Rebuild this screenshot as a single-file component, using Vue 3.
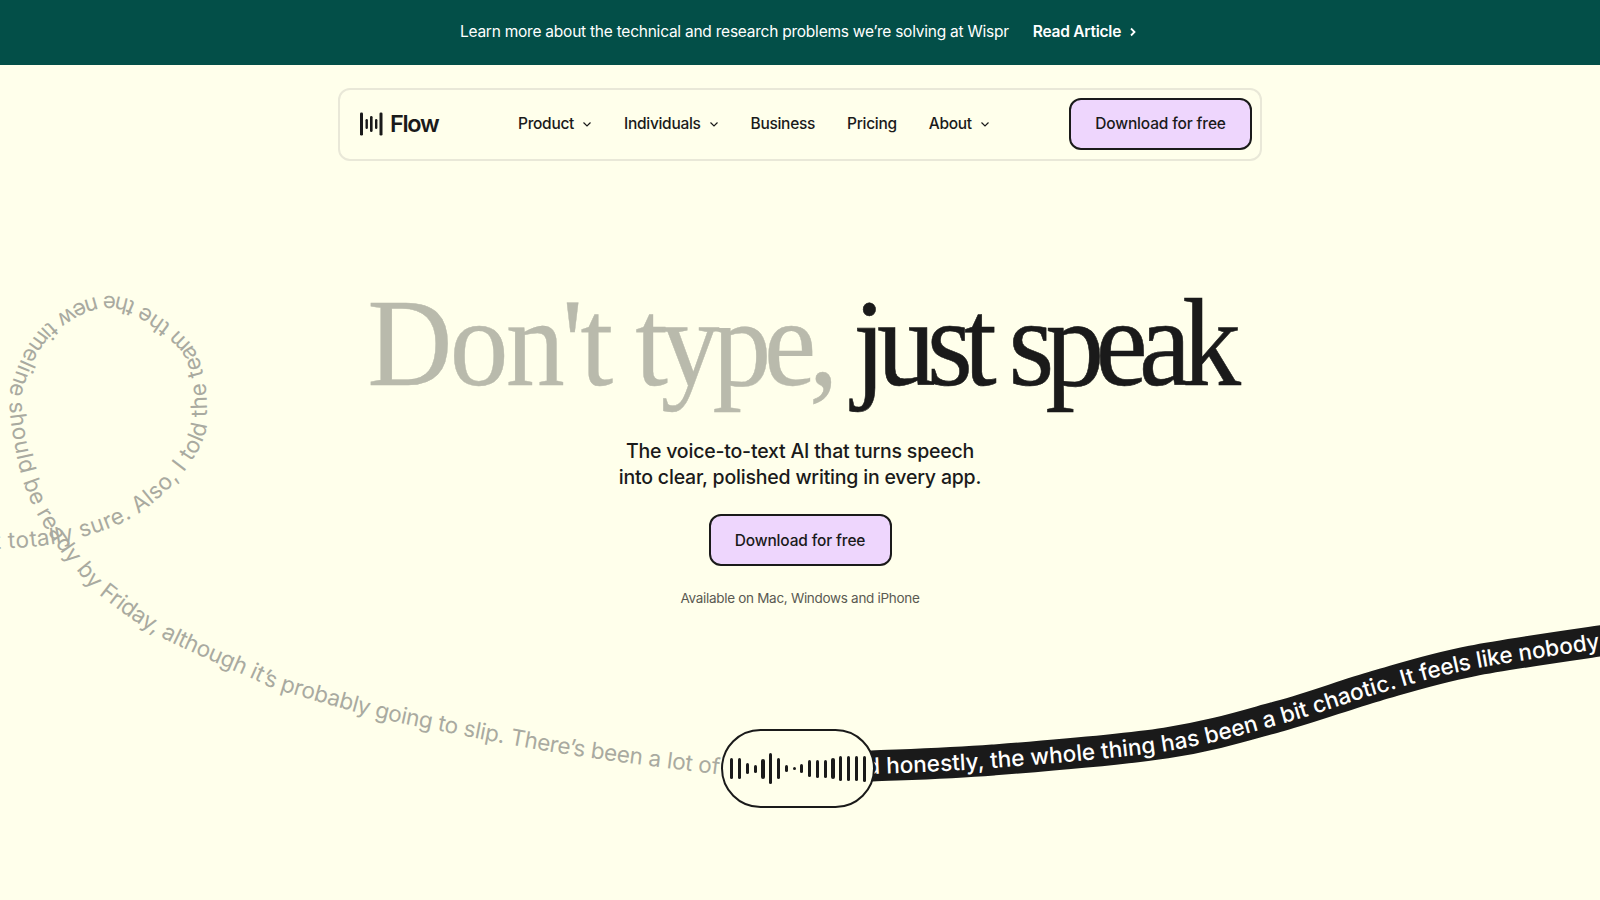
<template>
  <div class="page">
    <div class="banner">
      <span class="banner-text">Learn more about the technical and research problems we’re solving at Wispr</span>
      <a class="banner-link">Read Article
        <svg width="8" height="10" viewBox="0 0 8 10"><path d="M2 1.5 5.5 5 2 8.5" fill="none" stroke="#fff" stroke-width="1.8"/></svg>
      </a>
    </div>

    <nav class="nav">
      <div class="logo">
        <svg width="24" height="24" viewBox="0 0 24 24">
          <rect v-for="b in logoBars" :key="b.x" :x="b.x" :y="12 - b.h / 2" :width="b.w" :height="b.h" rx="1.3" fill="#1a1a1a" />
        </svg>
        <span class="logo-text">Flow</span>
      </div>
      <div class="links">
        <a v-for="l in links" :key="l.name" class="link">
          {{ l.name }}
          <svg v-if="l.menu" width="10" height="10" viewBox="0 0 10 10"><path d="M1.5 3.5 5 7l3.5-3.5" fill="none" stroke="#1a1a1a" stroke-width="1.2"/></svg>
        </a>
      </div>
      <button class="cta">Download for free</button>
    </nav>

    <main class="hero">
      <h1 class="title"><span class="muted"><span class="dont">Don't</span> <span class="type">type,</span></span> <span class="dark">just speak</span></h1>
      <p class="sub">The voice-to-text AI that turns speech<br>into clear, polished writing in every app.</p>
      <button class="cta">Download for free</button>
      <p class="avail">Available on Mac, Windows and iPhone</p>
    </main>

    <svg class="stream" width="1600" height="900" viewBox="0 0 1600 900">
      <path id="greyPath" :d="greyPath" fill="none" />
      <text class="grey-text"><textPath href="#greyPath"><tspan class="loop">t totally sure. Also, I told the team the the new timeline should be ready by </tspan>Friday, although it’s probably going to slip. There’s been a lot of back and forth</textPath></text>
      <path id="ribbonPath" :d="ribbonPath" fill="none" stroke="#1a1a1a" stroke-width="31" />
      <text class="ribbon-text" dy="8"><textPath href="#ribbonPath" startOffset="-10">and honestly, the whole thing has been a bit chaotic. It feels like nobody knows</textPath></text>
    </svg>

    <div class="pill">
      <i v-for="(h, i) in waveBars" :key="i" class="bar" :style="{ height: h + 'px' }"></i>
    </div>
  </div>
</template>

<script setup>
const links = [
  { name: 'Product', menu: true },
  { name: 'Individuals', menu: true },
  { name: 'Business' },
  { name: 'Pricing' },
  { name: 'About', menu: true }
]

const logoBars = [
  { x: 0, h: 23, w: 3 },
  { x: 5.5, h: 10, w: 2.4 },
  { x: 10, h: 16, w: 2.6 },
  { x: 15, h: 10, w: 2.4 },
  { x: 19.5, h: 23, w: 3 }
]

const waveBars = [21, 21, 11, 8, 20, 31, 21, 7, 3, 9, 17, 18, 18, 21, 25, 25, 25, 26]

// catmull-rom through the points, so the curves can be tuned by moving points
const smooth = (pts) => {
  let d = `M${pts[0][0]} ${pts[0][1]}`
  for (let i = 0; i < pts.length - 1; i++) {
    const p0 = pts[i - 1] || pts[i]
    const p1 = pts[i]
    const p2 = pts[i + 1]
    const p3 = pts[i + 2] || p2
    const c1 = [p1[0] + (p2[0] - p0[0]) / 6, p1[1] + (p2[1] - p0[1]) / 6]
    const c2 = [p2[0] - (p3[0] - p1[0]) / 6, p2[1] - (p3[1] - p1[1]) / 6]
    d += ` C${c1[0]} ${c1[1]} ${c2[0]} ${c2[1]} ${p2[0]} ${p2[1]}`
  }
  return d
}

const greyPath = smooth([
  [-6, 549], [40, 546], [80, 538], [133, 517], [177, 480], [203, 440], [207, 407], [203, 373],
  [190, 343], [157, 315], [120, 297], [80, 302], [37, 333], [13, 380], [10, 413], [20, 470],
  [35, 510], [60, 550], [78, 572], [102, 597], [161, 637], [251, 678], [279, 690], [375, 717],
  [440, 731], [512, 745], [591, 758], [730, 776]
])

const ribbonPath = smooth([
  [850, 767], [872, 766], [993, 760], [1166, 743], [1280, 716], [1376, 686], [1472, 661], [1620, 638]
])
</script>

<style>
html, body {
  margin: 0;
  background: #ffffeb;
}
</style>

<style scoped>
.page {
  position: relative;
  width: 1600px;
  height: 900px;
  overflow: hidden;
  background: #ffffeb;
  color: #1a1a1a;
  font-family: Inter, "Noto Sans", sans-serif;
}
.banner {
  display: flex;
  align-items: center;
  justify-content: center;
  gap: 24px;
  box-sizing: border-box;
  height: 65px;
  padding: 0 3px 2px 0;
  background: #034f48;
  color: #fff;
  font-size: 15.5px;
  letter-spacing: -0.24px;
}
.banner-text {
  font-weight: 400;
}
.banner-link {
  display: flex;
  align-items: center;
  gap: 8px;
  font-weight: 600;
}
.nav {
  display: flex;
  align-items: center;
  box-sizing: border-box;
  width: 924px;
  height: 73px;
  margin: 23px auto 0;
  padding: 0 8px 2px 20px;
  border: 2px solid #e9e8d8;
  border-radius: 12px;
}
.logo {
  display: flex;
  align-items: center;
  gap: 6px;
  width: 158px;
}
.logo-text {
  font-size: 23.5px;
  font-weight: 600;
  letter-spacing: -1.3px;
}
.links {
  display: flex;
  gap: 32px;
  flex: 1;
  font-size: 15.5px;
  font-weight: 500;
  letter-spacing: -0.3px;
}
.link {
  display: flex;
  align-items: center;
  gap: 8px;
}
.cta {
  box-sizing: border-box;
  width: 183px;
  height: 52px;
  border: 2px solid #1a1a1a;
  border-radius: 12px;
  background: #eed6fd;
  color: #1a1a1a;
  font-family: inherit;
  font-size: 15.5px;
  font-weight: 500;
  letter-spacing: -0.15px;
}
.hero {
  position: relative;
  z-index: 1;
  display: flex;
  flex-direction: column;
  align-items: center;
  margin-top: 107px;
}
.title {
  margin: 0;
  font-family: "Liberation Serif", serif;
  font-size: 125px;
  font-weight: 400;
  line-height: 150px;
  word-spacing: -8px;
  white-space: nowrap;
  transform: scaleX(0.94);
}
.muted {
  color: #b9baac;
  word-spacing: -5px;
  -webkit-text-stroke: 0.4px #b9baac;
}
.dont {
  letter-spacing: -2.8px;
}
.type {
  letter-spacing: -7.6px;
}
.dark {
  letter-spacing: -9.3px;
  word-spacing: 0;
  -webkit-text-stroke: 0.6px #1a1a1a;
}
.sub {
  margin: 20px 0 24px;
  font-size: 19.5px;
  font-weight: 500;
  line-height: 26px;
  letter-spacing: -0.2px;
  text-align: center;
}
.avail {
  margin: 24px 0 0;
  font-size: 13.5px;
  letter-spacing: -0.3px;
  color: #5a5a52;
}
.stream {
  position: absolute;
  left: 0;
  top: 0;
}
.grey-text {
  font-size: 22.5px;
  fill: #a9aaa0;
  letter-spacing: -0.28px;
}
.loop {
  letter-spacing: 0.4px;
}
.ribbon-text {
  font-size: 22.5px;
  font-weight: 500;
  fill: #fff;
  letter-spacing: 0;
}
.pill {
  position: absolute;
  left: 721px;
  top: 729px;
  box-sizing: border-box;
  display: flex;
  align-items: center;
  justify-content: center;
  gap: 4.7px;
  width: 154px;
  height: 79px;
  border: 2.5px solid #1a1a1a;
  border-radius: 40px;
  background: #ffffeb;
}
.bar {
  display: block;
  width: 3.1px;
  border-radius: 2px;
  background: #1a1a1a;
}
</style>
